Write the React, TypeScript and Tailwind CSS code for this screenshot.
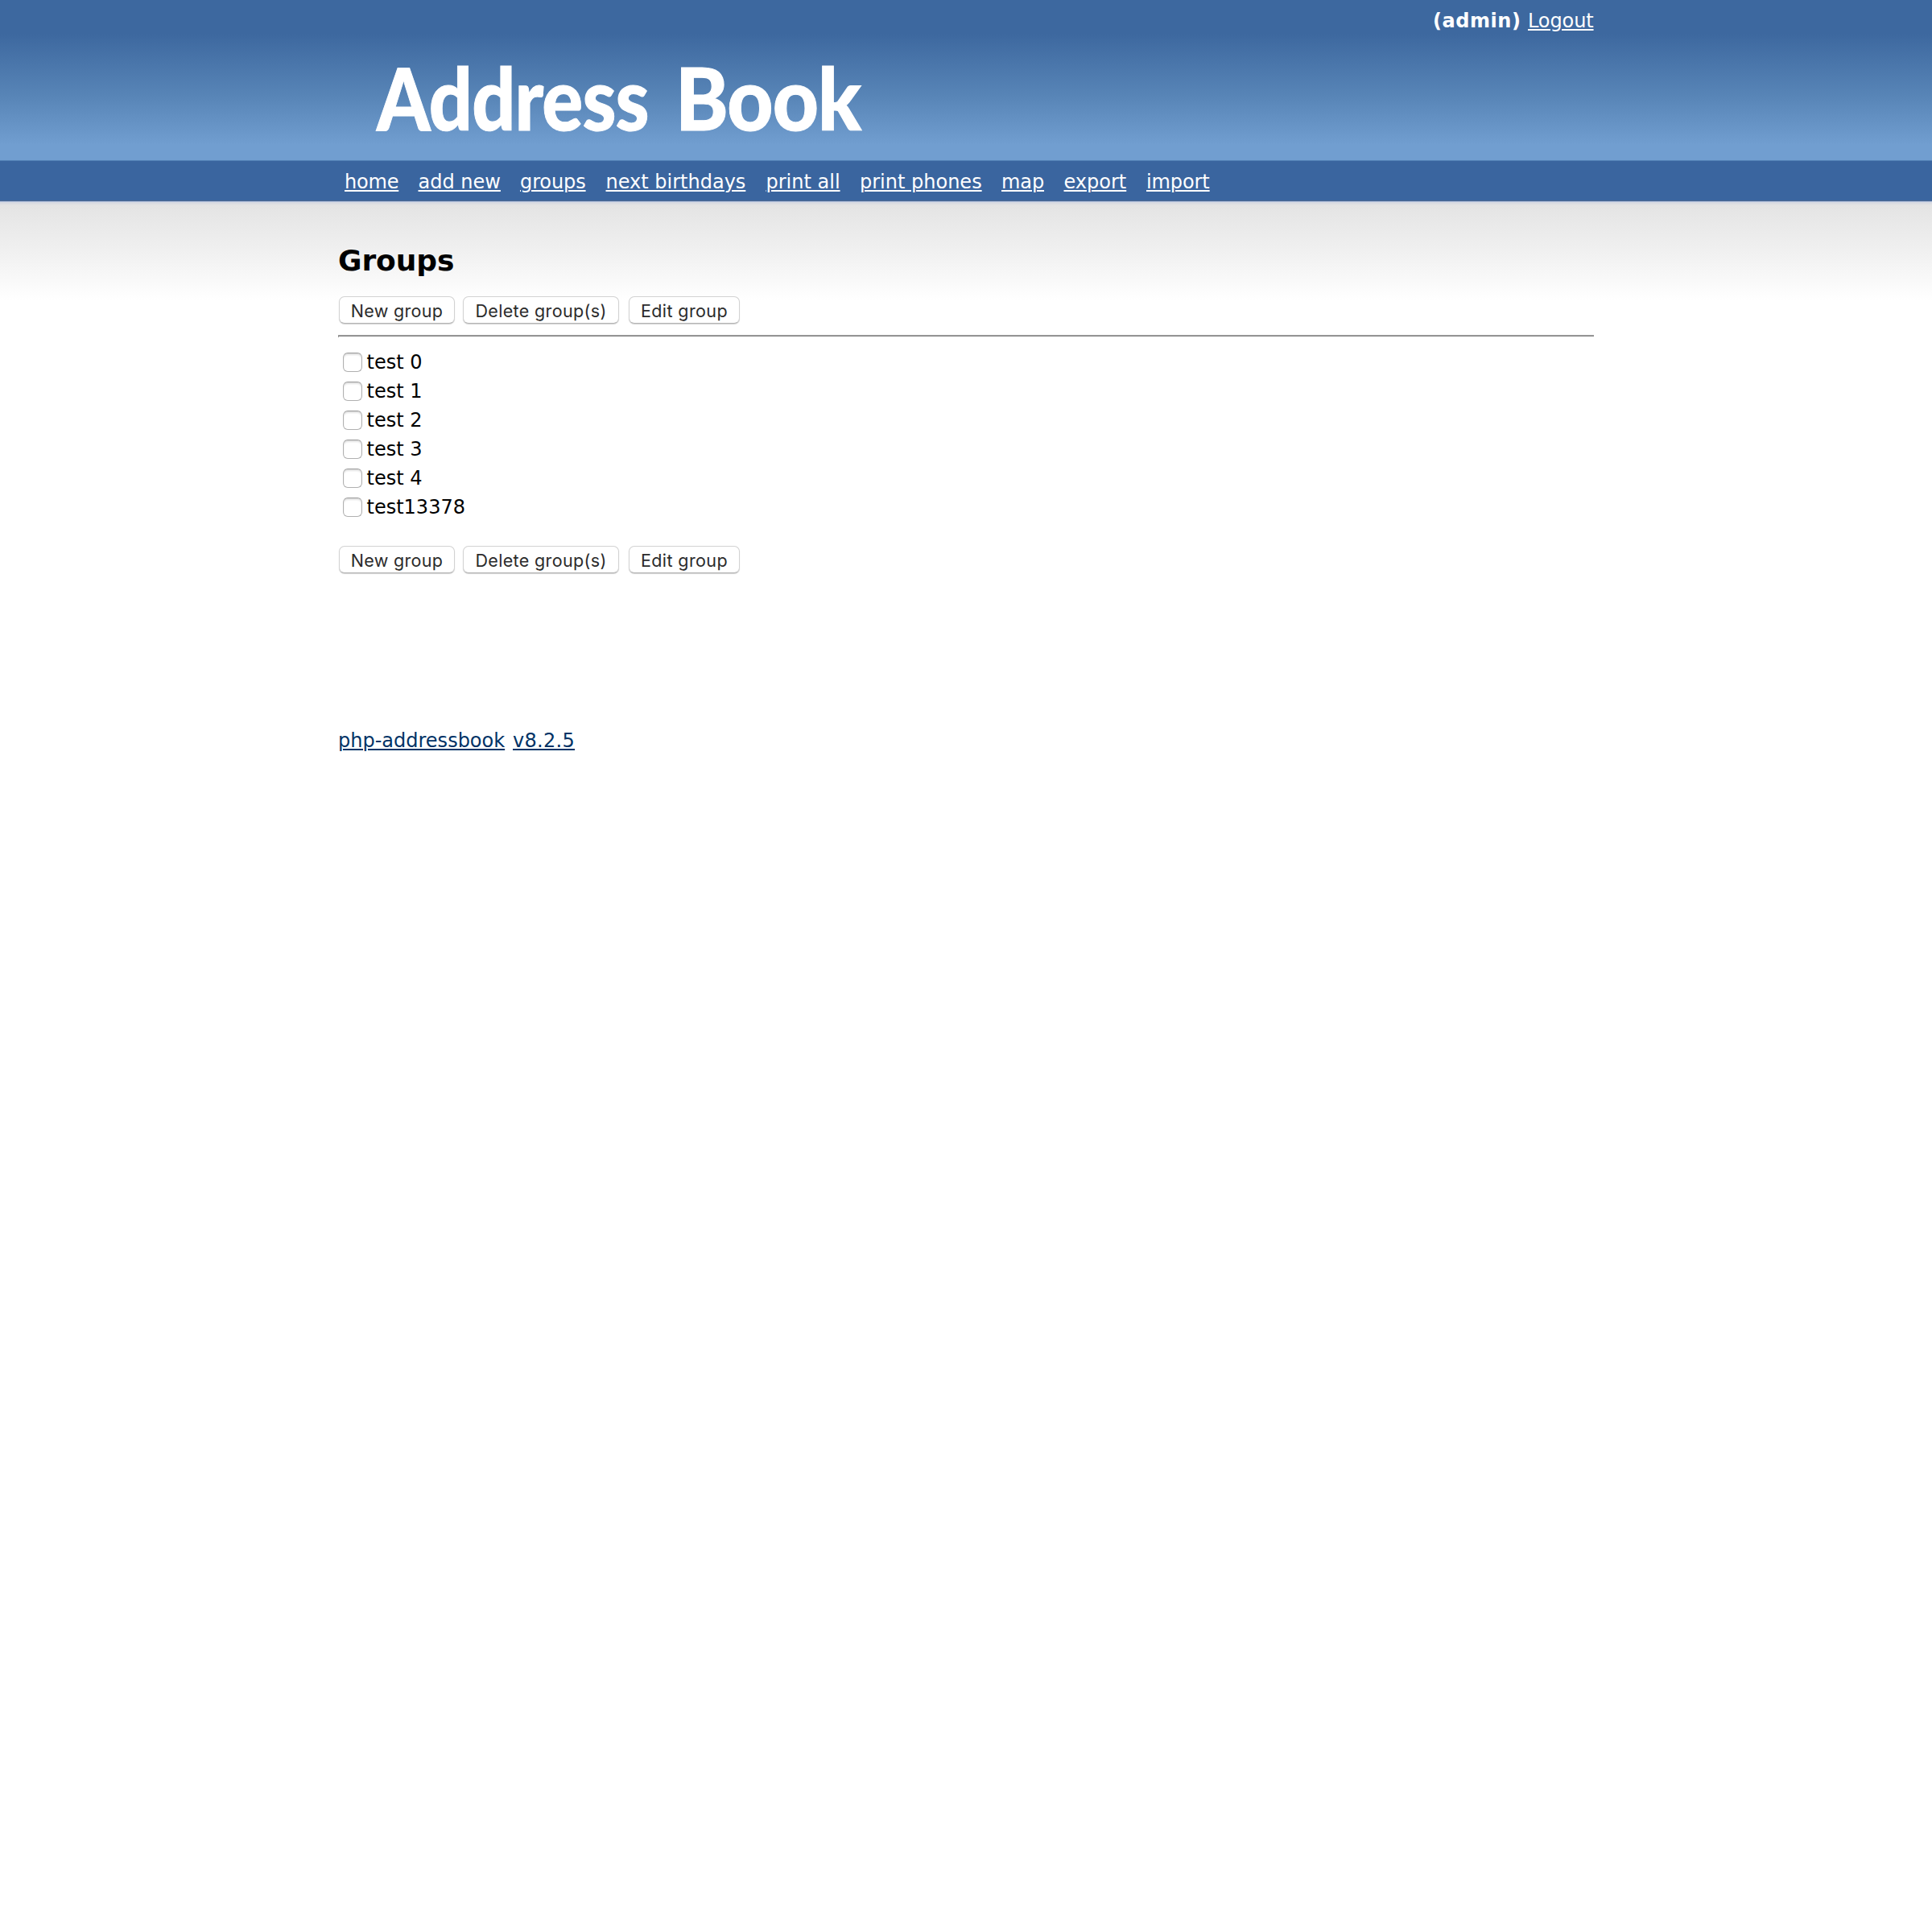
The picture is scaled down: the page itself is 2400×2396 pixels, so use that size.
const nav = [
  { label: "home", cls: "w-[67px] tracking-[-0.2px]" },
  { label: "add new", cls: "w-[102px]" },
  { label: "groups", cls: "w-[82px] tracking-[-0.1px]" },
  { label: "next birthdays", cls: "w-[174.5px]" },
  { label: "print all", cls: "w-[92px]" },
  { label: "print phones", cls: "w-[151.5px]" },
  { label: "map", cls: "w-[53px] tracking-[-0.1px]" },
  { label: "export", cls: "w-[78px]" },
  { label: "import", cls: "w-[79px] tracking-[-0.1px]" },
];

const groups = ["test 0", "test 1", "test 2", "test 3", "test 4", "test13378"];

const link = "underline decoration-2 underline-offset-[2px] whitespace-nowrap";
const button =
  "h-[34px] rounded-[7px] border border-[#d2d2d2] border-b-[#b4b4b4] bg-white pt-px text-center font-['Inter',sans-serif] text-[21.5px] leading-[32px] text-[#2b2b2b] shadow-[0_1px_1px_rgba(0,0,0,0.18)] whitespace-nowrap";

function Actions() {
  return (
    <div className="flex h-[34px] pl-px">
      <button className={`${button} w-[144px] tracking-[0.3px]`}>New group</button>
      <button className={`${button} ml-[10px] w-[194px] tracking-[0.35px]`}>Delete group(s)</button>
      <button className={`${button} ml-[12px] w-[138px] tracking-[0.4px]`}>Edit group</button>
    </div>
  );
}

export default function App() {
  return (
    <div className="min-h-[2396px] w-full bg-white font-['DejaVu_Sans',sans-serif] text-2xl text-black">
      <header className="h-[199px] bg-[linear-gradient(to_bottom,#3d689f_0px,#3d689f_42px,#5885b7_120px,#719ed0_180px,#719ed0_199px)] text-white">
        <div className="mx-auto w-[1560px]">
          <div className="flex h-[52px] justify-end leading-[52px]">
            <b className="mr-[9px] w-[109px] tracking-[0.55px]">(admin)</b>
            <a className={`${link} w-[82px] tracking-[-0.1px]`}>Logout</a>
          </div>
          <h1 className="flex h-[110px] pl-[48px] font-['Lato',sans-serif] text-[107px] leading-[137px] font-black [-webkit-text-stroke:1px_white]">
            <span className="w-[371px] origin-left scale-x-[0.888] tracking-[-1px]">Address</span>
            <span className="origin-left scale-x-[0.928] tracking-[-1px]">Book</span>
          </h1>
        </div>
      </header>
      <nav className="h-[52px] border-t border-[#517fb4] bg-[#3a659f] text-white">
        <div className="mx-auto flex h-[49px] w-[1560px] gap-[24.5px] pl-2 leading-[52px]">
          {nav.map((n) => (
            <a key={n.label} className={`${link} ${n.cls}`}>{n.label}</a>
          ))}
        </div>
        <div className="h-px bg-[#506a90]" />
        <div className="h-px bg-[#b6c5e2]" />
      </nav>
      <main className="bg-[linear-gradient(to_bottom,#d3d6e0_0px,#e4e4e4_4px,#f0f0f0_60px,#ffffff_122px)] bg-no-repeat">
        <div className="mx-auto w-[1560px]">
          <h2 className="h-[117px] pt-[49px] text-[36px] leading-[48px] font-bold tracking-[-0.1px]">Groups</h2>
          <Actions />
          <div className="mt-[14px] h-[3px] border-t-2 border-l border-[#959595] bg-[#eeeeee]" />
          <ul className="mt-[13px]">
            {groups.map((g) => (
              <li key={g} className="flex h-9 items-center pl-[6px] leading-9">
                <span className="mr-[5.5px] size-6 rounded-[6px] border border-[#b0b0b0] border-t-[#969696] bg-white shadow-[inset_0_2px_2px_rgba(0,0,0,0.12)]" />
                <span>{g}</span>
              </li>
            ))}
          </ul>
          <div className="mt-[30px]">
            <Actions />
          </div>
          <footer className="mt-[190px] flex gap-[9px] leading-9 text-[#003366]">
            <a className={`${link} w-[208px]`}>php-addressbook</a>
            <a className={`${link} tracking-[0.3px]`}>v8.2.5</a>
          </footer>
        </div>
      </main>
    </div>
  );
}
